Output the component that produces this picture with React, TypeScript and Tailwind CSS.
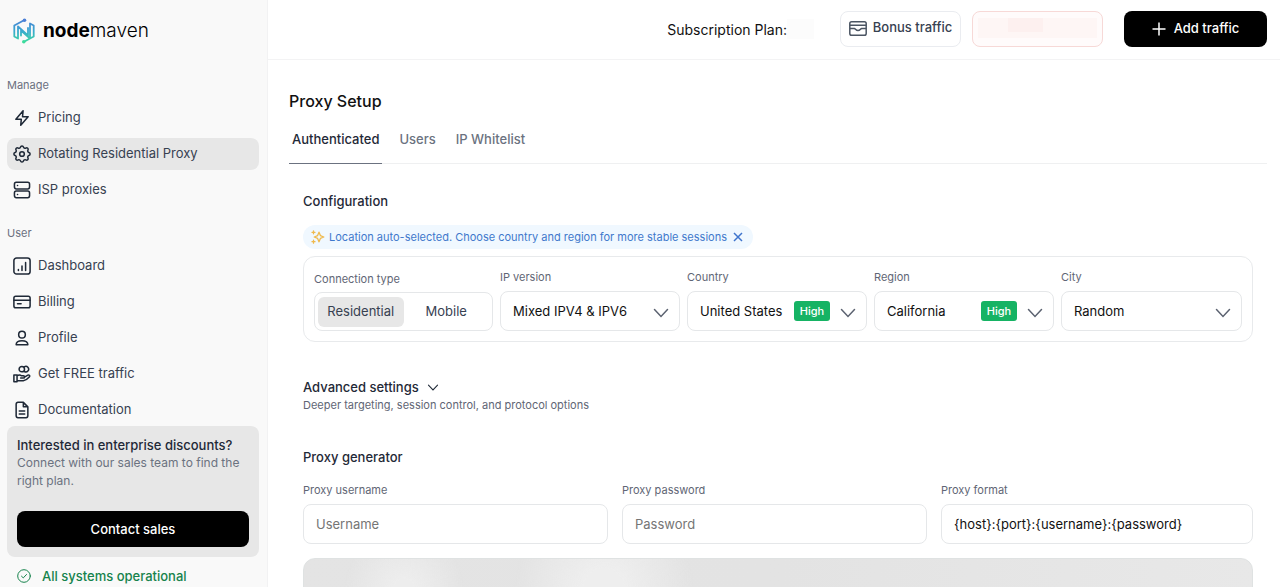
import { useState, type ReactNode } from 'react'
import { clsx } from 'clsx'

type IconName = 'zap' | 'gear' | 'server' | 'chart' | 'card' | 'user' | 'coins' | 'doc'

const ICONS: Record<IconName, ReactNode> = {
  zap: <path d="M11.2 2 3.2 11.5h6l-.6 6.5 8.2-9.5h-6.2z" />,
  gear: (
    <g transform="translate(-2 -2)">
      <path d="M10.325 4.317c.426-1.756 2.924-1.756 3.35 0a1.724 1.724 0 0 0 2.573 1.066c1.543-.94 3.31.826 2.37 2.37a1.724 1.724 0 0 0 1.065 2.572c1.756.426 1.756 2.924 0 3.35a1.724 1.724 0 0 0-1.066 2.573c.94 1.543-.826 3.31-2.37 2.37a1.724 1.724 0 0 0-2.572 1.065c-.426 1.756-2.924 1.756-3.35 0a1.724 1.724 0 0 0-2.573-1.066c-1.543.94-3.31-.826-2.37-2.37a1.724 1.724 0 0 0-1.065-2.572c-1.756-.426-1.756-2.924 0-3.35a1.724 1.724 0 0 0 1.066-2.573c-.94-1.543.826-3.31 2.37-2.37 1 .608 2.296.07 2.572-1.065z" />
      <circle cx="12" cy="12" r="2.6" />
    </g>
  ),
  server: (
    <>
      <rect x="1.6" y="1.5" width="16.8" height="7.3" rx="2" />
      <rect x="1.6" y="11.2" width="16.8" height="7.3" rx="2" />
      <path d="M5 5.1h.1M5 14.9h.1" />
    </>
  ),
  chart: (
    <>
      <rect x="1" y="1" width="18" height="18" rx="3" />
      <path d="M6 14v1M10 10v5M14 6v9" />
    </>
  ),
  card: (
    <>
      <rect x="1" y="3.5" width="18" height="13" rx="2" />
      <path d="M1 8h18M5 12h4" />
    </>
  ),
  user: (
    <>
      <circle cx="10" cy="6.3" r="3.7" />
      <path d="M3.5 17.5c0-3 2.5-4.500 6.500-4.500s6.500 1.500 6.500 4.500z" />
    </>
  ),
  coins: (
    <>
      <circle cx="9.800" cy="4.600" r="3" />
      <path d="M12.500 2.200a3 3 0 1 1 0 4.800" />
      <path d="M1 11h3.500v7.500H1zM4.500 12c2-1.300 3.500-1.200 5 0h2c1.800 0 1.800 2.500 0 2.500H8.500M12.800 13.500l3.700-2.200c1.500-.8 2.700.8 1.600 2-2 2.200-4.200 4-6.600 4.200-2.500.2-4.500-.2-7-.2" />
    </>
  ),
  doc: <path d="M11.500 1.500h-6a2 2 0 0 0-2 2v13a2 2 0 0 0 2 2h9a2 2 0 0 0 2-2v-10zM11.500 1.500v5h5M7 11h6M7 14.500h6" />,
}

const MANAGE: { label: string; icon: IconName }[] = [
  { label: 'Pricing', icon: 'zap' },
  { label: 'Rotating Residential Proxy', icon: 'gear' },
  { label: 'ISP proxies', icon: 'server' },
]

const USER: { label: string; icon: IconName }[] = [
  { label: 'Dashboard', icon: 'chart' },
  { label: 'Billing', icon: 'card' },
  { label: 'Profile', icon: 'user' },
  { label: 'Get FREE traffic', icon: 'coins' },
  { label: 'Documentation', icon: 'doc' },
]

const TABS = ['Authenticated', 'Users', 'IP Whitelist']

function NavGroup({ title, items, active }: { title: string; items: typeof MANAGE; active?: string }) {
  return (
    <nav aria-label={title}>
      <p className="mb-[9px] text-[11px] leading-4 text-[#6b7080]">{title}</p>
      <ul className="flex flex-col gap-1">
        {items.map(({ label, icon }) => (
          <li key={label}>
            <a
              href="#"
              className={clsx(
                'flex h-8 items-center gap-[7px] rounded-lg pl-[6px] text-[13px] text-[#374151]',
                label === active && 'bg-[#e7e7e7]'
              )}
            >
              <svg
                viewBox="0 0 20 20"
                className="size-[18px] text-[#1f2937]"
                fill="none"
                stroke="currentColor"
                strokeWidth="1.7"
                strokeLinecap="round"
                strokeLinejoin="round"
              >
                {ICONS[icon]}
              </svg>
              {label}
            </a>
          </li>
        ))}
      </ul>
    </nav>
  )
}

function Logo() {
  return (
    <a href="#" className="flex items-center gap-2 pl-[6px]" aria-label="nodemaven">
      <svg viewBox="0 0 22 26" className="h-[26px] w-[22px]" fill="none" strokeLinecap="round" strokeLinejoin="round">
        <defs>
          <linearGradient id="logo" x1="11" y1="1" x2="11" y2="25" gradientUnits="userSpaceOnUse">
            <stop stopColor="#4b7fd6" />
            <stop offset=".5" stopColor="#39a9cf" />
            <stop offset="1" stopColor="#3ddc9c" />
          </linearGradient>
        </defs>
        <g stroke="url(#logo)" strokeWidth="1.8">
          <path d="M11 2.300 1.300 7.500v11l3.700 2V8.500l10 9V10" />
          <path d="M11 23.700l9.700-5.200v-11l-3.700-2v15L8 12.500v5" />
        </g>
        <circle cx="11.500" cy="2.300" r="1.800" fill="#4b7fd6" />
        <circle cx="10.800" cy="23.700" r="1.800" fill="#3ddc9c" />
      </svg>
      <span className="text-[19px] leading-6 font-light text-black">
        <b className="font-bold">node</b>maven
      </span>
    </a>
  )
}

function Chevron({ className }: { className: string }) {
  return (
    <svg viewBox="0 0 16 10" className={className} fill="none" stroke="currentColor" strokeWidth="1.5" strokeLinecap="round">
      <path d="m1.500 1.500 6.500 7 6.500-7" />
    </svg>
  )
}

function SelectField({ id, label, value, badge }: { id: string; label: string; value: string; badge?: string }) {
  return (
    <div>
      <label htmlFor={id} className="mb-1.5 block text-[11px] leading-4 text-[#5f6675]">
        {label}
      </label>
      <div className="relative">
        <select
          id={id}
          className="h-10 w-full appearance-none rounded-lg border border-[#e5e7e9] bg-white pt-px pl-3 text-[13px] text-[#111]"
        >
          <option>{value}</option>
        </select>
        <div className="pointer-events-none absolute inset-y-0 right-[11px] flex items-center gap-[10px]">
          {badge && (
            <span className="w-9 rounded-[3px] bg-[#16b364] text-center text-[11px] leading-5 font-medium text-white">
              {badge}
            </span>
          )}
          <Chevron className="mt-1 h-[10px] w-4 text-[#5b6270]" />
        </div>
      </div>
    </div>
  )
}

function TextField({ id, label, ...rest }: { id: string; label: string; placeholder?: string; defaultValue?: string }) {
  return (
    <div>
      <label htmlFor={id} className="mb-1.5 block text-[11px] leading-4 text-[#5f6675]">
        {label}
      </label>
      <input
        id={id}
        className="h-10 w-full rounded-lg border border-[#e5e7e9] bg-white px-3 text-[13px] text-[#111] placeholder:text-[#757575]"
        {...rest}
      />
    </div>
  )
}

function Sidebar() {
  return (
    <aside className="flex w-[268px] shrink-0 flex-col border-r border-[#f2f2f3] bg-[#f9f9f9] pt-[18px] pr-2 pl-[7px]">
      <Logo />
      <div className="mt-[33px] flex flex-col gap-[19px]">
        <NavGroup title="Manage" items={MANAGE} active="Rotating Residential Proxy" />
        <NavGroup title="User" items={USER} />
      </div>
      <section className="rounded-lg bg-[#e7e7e7] p-[10px] leading-[18px]">
        <h2 className="text-[13px] font-medium text-[#1f2937]">Interested in enterprise discounts?</h2>
        <p className="text-[12px] text-[#6b7280]">Connect with our sales team to find the right plan.</p>
        <button className="mt-[21px] h-9 w-full rounded-lg bg-black text-[13px] font-medium text-white">
          Contact sales
        </button>
      </section>
      <a href="#" className="mt-[9px] flex items-center gap-[11px] pl-[10px] text-[13px] leading-5 font-medium text-[#16834c]">
        <svg viewBox="0 0 14 14" className="size-[14px]" fill="none" stroke="currentColor" strokeLinecap="round" strokeLinejoin="round">
          <circle cx="7" cy="7" r="6.300" />
          <path d="m4.500 7.200 1.800 1.700 3.200-3.400" />
        </svg>
        All systems operational
      </a>
    </aside>
  )
}

function Header() {
  return (
    <header className="flex h-[60px] items-start justify-end border-b border-[#f3f3f4] pt-[11px] pr-[13px]">
      <p className="flex h-9 items-center text-[14px] text-[#111]">
        Subscription Plan:
        <span className="mr-[26px] h-5 w-[27px] bg-[#fcfcfc]" />
      </p>
      <button className="flex h-9 w-[121px] items-center justify-center gap-[6px] rounded-lg border border-[#eaecf0] pb-[2px] text-[13px] font-medium text-[#374151]">
        <svg viewBox="0 0 18 15" className="h-[15px] w-[18px]" fill="none" stroke="#4b5563" strokeWidth="1.5" strokeLinejoin="round">
          <rect x=".8" y=".8" width="16.400" height="13.400" rx="1.800" />
          <path d="M1 4.200h16M1 7.600h4.500c.8 0 1.500 2 3.500 2s2.700-2 3.500-2H17" />
        </svg>
        Bonus traffic
      </button>
      <div className="ml-[11px] flex h-9 w-[131px] items-start justify-center rounded-lg border border-[#f7d9d7] bg-[#fffbfb] pt-[6px]">
        <div className="flex h-5 w-[119px] bg-[#fef6f5] pl-[30px]">
          <div className="h-[14px] w-[35px] bg-[#fdf0ef]" />
        </div>
      </div>
      <button className="ml-[21px] flex h-9 w-[143px] items-center justify-center gap-2 rounded-lg bg-black text-[13px] font-medium text-white">
        <svg viewBox="0 0 14 14" className="size-[14px]" fill="none" stroke="currentColor" strokeWidth="1.5">
          <path d="M7 .5v13M.5 7h13" />
        </svg>
        Add traffic
      </button>
    </header>
  )
}

export default function App() {
  const [tab, setTab] = useState(TABS[0])
  const [connection, setConnection] = useState('Residential')
  const [hintOpen, setHintOpen] = useState(true)

  return (
    <div className="flex h-screen overflow-hidden bg-white font-['Inter',sans-serif]">
      <Sidebar />
      <div className="min-w-0 flex-1">
        <Header />
        <main className="pt-[29px] pr-[13px] pl-[21px]">
          <h1 className="text-[16px] leading-6 font-medium text-[#111]">Proxy Setup</h1>
          <div role="tablist" className="mt-[13px] flex gap-[14px] border-b border-[#eff0f1]">
            {TABS.map((t) => (
              <button
                key={t}
                role="tab"
                aria-selected={t === tab}
                onClick={() => setTab(t)}
                className={clsx(
                  '-mb-px flex h-[38px] items-start border-b px-[3px] pt-[3px] text-[13px] leading-5 font-medium',
                  t === tab ? 'border-[#6b7280] text-[#1f2937]' : 'border-transparent text-[#6b7280]'
                )}
              >
                {t}
              </button>
            ))}
          </div>

          <div className="px-[14px]">
            <h2 className="mt-[27px] text-[13px] leading-5 font-medium text-[#1f2937]">Configuration</h2>
            {hintOpen && (
              <div className="mt-[14px] flex h-6 w-fit items-center rounded-full bg-[#f0f8ff] pr-[10px] pl-2 text-[11px] text-[#3f78cc]">
                <svg viewBox="0 0 14 14" className="mr-1 size-[14px]" fill="none" stroke="#efb94d" strokeWidth="1.3" strokeLinecap="round" strokeLinejoin="round">
                  <path d="M8 2.200 9.400 5.600 12.800 7 9.400 8.400 8 11.800 6.600 8.400 3.200 7l3.400-1.400zM2.500.8v3M1 2.300h3M2.500 10.200v3M1 11.700h3" />
                </svg>
                Location auto-selected. Choose country and region for more stable sessions
                <button aria-label="Dismiss" className="ml-[6px]" onClick={() => setHintOpen(false)}>
                  <svg viewBox="0 0 10 10" className="size-[10px]" fill="none" stroke="#3f74cd" strokeWidth="1.5">
                    <path d="m1 1 8 8M9 1 1 9" />
                  </svg>
                </button>
              </div>
            )}

            <section className="mt-[7px] grid grid-cols-[179fr_180fr_180fr_180fr_181fr] gap-[7px] rounded-xl border border-[#e8eaec] px-[10px] pt-3 pb-[10px]">
              <fieldset>
                <legend className="mb-[5px] pt-[2px] text-[11px] leading-4 text-[#5f6675]">Connection type</legend>
                <div className="flex h-[39px] rounded-lg border border-[#e5e7e9] p-[3px] pt-1">
                  {['Residential', 'Mobile'].map((c) => (
                    <button
                      key={c}
                      aria-pressed={c === connection}
                      onClick={() => setConnection(c)}
                      className={clsx(
                        'flex-1 rounded-md text-[13px] text-[#374151]',
                        c === connection && 'bg-[#e7e7e7]'
                      )}
                    >
                      {c}
                    </button>
                  ))}
                </div>
              </fieldset>
              <SelectField id="ip" label="IP version" value="Mixed IPV4 &amp; IPV6" />
              <SelectField id="country" label="Country" value="United States" badge="High" />
              <SelectField id="region" label="Region" value="California" badge="High" />
              <SelectField id="city" label="City" value="Random" />
            </section>

            <button className="mt-[35px] flex items-center gap-2 text-[13px] leading-5 font-medium text-[#1f2937]">
              Advanced settings
              <Chevron className="h-[7px] w-3" />
            </button>
            <p className="text-[11px] leading-4 text-[#5f6675]">
              Deeper targeting, session control, and protocol options
            </p>

            <h2 className="mt-[34px] text-[13px] leading-5 font-medium text-[#1f2937]">Proxy generator</h2>
            <form className="mt-[15px] grid grid-cols-[305fr_305fr_312fr] gap-[14px]">
              <TextField id="username" label="Proxy username" placeholder="Username" />
              <TextField id="password" label="Proxy password" placeholder="Password" />
              <TextField id="format" label="Proxy format" defaultValue="{host}:{port}:{username}:{password}" />
            </form>

            <div className="mt-[14px] h-40 rounded-xl border border-[#dfe2e2] bg-linear-to-r from-[#e4e4e4] via-[#e3e3e3] to-[#e8e8e8]">
              <div className="h-full rounded-xl bg-[radial-gradient(circle_at_100px_30px,#ededed_10px,transparent_60px),radial-gradient(circle_at_300px_30px,#eeeeee_20px,transparent_90px)]" />
            </div>
          </div>
        </main>
      </div>
    </div>
  )
}
